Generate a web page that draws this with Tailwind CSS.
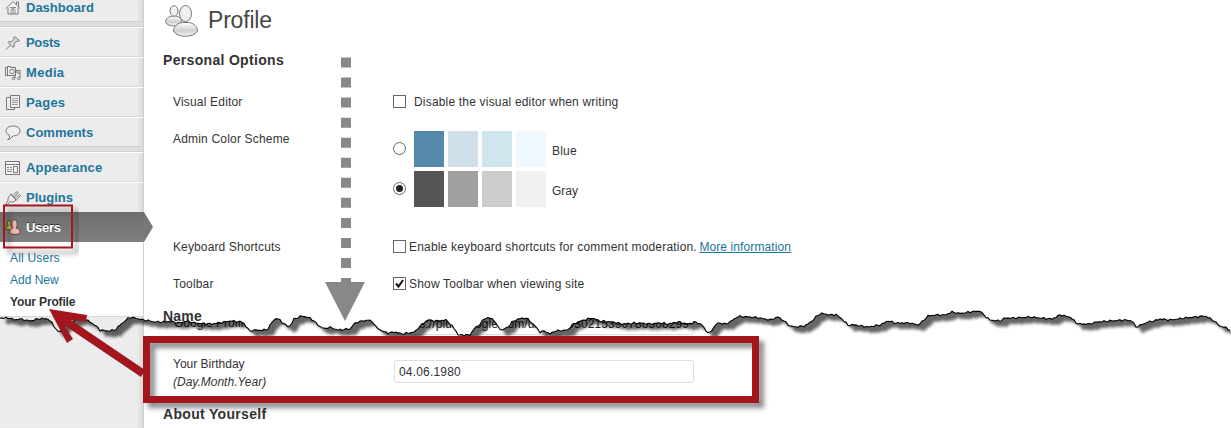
<!DOCTYPE html>
<html lang="en">
<head>
<meta charset="utf-8">
<title>Profile</title>
<script src="https://cdn.jsdelivr.net/npm/@tailwindcss/browser@4"></script>
</head>
<body class="relative w-[1231px] h-[428px] overflow-hidden bg-white font-['Liberation_Sans',Arial,sans-serif] text-[12px] leading-[16px] text-[#333]">
<div class="flex h-full">
  <aside class="w-36 shrink-0 bg-[#ececec] border-r border-[#cfcfcf] shadow-[inset_-5px_0_5px_-3px_rgba(0,0,0,0.10)] h-full">
    <nav class="text-[13px] font-bold text-[#21759b]">
      <a class="flex h-[22px] items-start gap-[5px] pl-[5px] border-b border-[#cfcfcf]"><svg class="w-4 h-4 shrink-0" viewBox="0 0 16 16" fill="none" stroke="#777"><path d="M1 8.500 8 1.500l7 7M3 7.500V14h10V7.500M11.500 4.500V2h2v4.500" fill="#f6f6f6"/><path d="M6 14V9.500q2-2 4 0V14M8 8.500V14M5 7.500h6" stroke="#888"/></svg><span>Dashboard</span></a>
      <div class="h-[5px] bg-[#dedede] border-b border-[#cfcfcf]"></div>
      <a class="flex h-[30px] items-center gap-[5px] pl-[5px] pt-px border-t border-t-white border-b border-b-[#dadada]"><svg class="w-4 h-4 shrink-0" viewBox="0 0 16 16" fill="#dcdcdc" stroke="#777"><path d="M9.500 1.500l5 4-1.500 1-1.500-.4-2.500 3 .3 2.400-1.300.8L3 7.500l1-1 2.700.2 2.600-2.700-.8-1.300z"/><path d="M5.500 10 1 14.500" /></svg><span class="tracking-[-0.3px]">Posts</span></a>
      <a class="flex h-[30px] items-center gap-[5px] pl-[5px] pt-px border-t border-t-white border-b border-b-[#dadada]"><svg class="w-4 h-4 shrink-0" viewBox="0 0 16 16" fill="#f4f4f4" stroke="#777"><path d="M.5 2.500h2v-1h3v1h5v8H.5z"/><circle cx="7" cy="6.500" r="2.300"/><path d="M2.500 2.500v8"/><path d="M11 5.500h4V13M12 5.500V8h3" fill="none"/><circle cx="13.700" cy="13.500" r="1.300"/><circle cx="8.500" cy="13.500" r="1.300"/><path d="M10 13.500v-4"/></svg><span class="tracking-[0.3px]">Media</span></a>
      <a class="flex h-[30px] items-center gap-[5px] pl-[5px] pt-px border-t border-t-white border-b border-b-[#dadada]"><svg class="w-4 h-4 shrink-0" viewBox="0 0 16 16" fill="#eee" stroke="#777"><path d="M1.500 2.500h8v12h-8z"/><path d="M5.500.5h9v12h-9z"/><path d="M7 3.500h2M10 3.500h3M7 5.500h6M7 7.500h6M7 9.500h6" stroke="#999"/></svg><span class="tracking-[0.2px]">Pages</span></a>
      <a class="flex h-[30px] items-center gap-[5px] pl-[5px] pt-px border-t border-t-white border-b border-b-[#cfcfcf]"><svg class="w-4 h-4 shrink-0" viewBox="0 0 16 16" fill="#f0f0f0" stroke="#777"><path d="M8 1c4 0 7 1.800 7 4.800s-3 5-5.500 5c-.8 0-1 0-1.500.2L4.500 14.500H2.500L4.500 13V10C2.500 9.300 1 8 1 6c0-3 3-5 7-5z"/></svg><span>Comments</span></a>
      <div class="h-[5px] bg-[#dedede] border-b border-[#cfcfcf]"></div>
      <a class="flex h-[30px] items-center gap-[5px] pl-[5px] pt-px border-t border-t-white border-b border-b-[#dadada]"><svg class="w-4 h-4 shrink-0" viewBox="0 0 16 16" fill="#f4f4f4" stroke="#777"><path d="M.5 1.500h14v13H.5z"/><path d="M.5 4.500h14"/><path d="M8.500 6.500h4v6h-4z"/><path d="M2 7.500h2M5 7.500h2M2 9.500h2M5 9.500h2M2 11.500h5" stroke="#888"/></svg><span class="tracking-[0.2px]">Appearance</span></a>
      <a class="flex h-[30px] items-center gap-[5px] pl-[5px] border-t border-t-white"><svg class="w-4 h-4 shrink-0" viewBox="0 0 16 16" fill="#eee" stroke="#777"><path d="M6 4.500 11 10c-1.500 2-4 2.500-6 1.500L2.500 14.500H.5L3 10.500C2.500 8.500 4 6 6 4.500z"/><path d="M5.500 3.500l6.500 7M8 5.500 12 1.500l1 1L9.500 7M10.500 8l4-3.500.8 1L12 9.500"/></svg><span>Plugins</span></a>
      <a class="relative flex h-[30px] w-36 items-center gap-[5px] pl-[5px] bg-linear-to-b from-[#6d6d6d] to-[#808080] text-white [text-shadow:0_-1px_0_#333]"><svg class="w-4 h-4 shrink-0" viewBox="0 0 16 16"><g fill="#b9b446" stroke="#333" stroke-width=".8"><path d="M.8 10.500C1 8 2.500 7 3.200 6.800 2 5 2.500 1.500 4.200 1.500S6.500 5 5.500 6.500L8 9v2z"/></g><g fill="#eeb4b0" stroke="#4a3030" stroke-width=".8"><path d="M4.500 14c0-3 1.500-4.500 3.500-5C6 6 6.700.8 9.500.8S13 6 11.200 9c2.300.5 4.200 2 4.200 5-2.500 2-8.400 2-10.900 0z"/></g></svg><span class="pt-px tracking-[-0.3px]">Users</span>
        <svg class="absolute left-36 top-0 w-[9px] h-[30px]" viewBox="0 0 9 30"><path d="M0 0 9 15 0 30z" fill="#777"/></svg></a>
    </nav>
    <div class="bg-white h-[75px] pt-[5px] pl-[10px] border-b border-[#d8d8d8] text-[#21759b] leading-[22px]">
      <div class="tracking-[0.2px]">All Users</div><div>Add New</div><div class="font-bold text-[#333] tracking-[-0.15px]">Your Profile</div>
    </div>
  </aside>
  <main class="grow pl-[19px] tracking-[0.185px]">
    <header class="flex items-start h-[52px] pt-[3px]">
      <svg class="w-[36px] h-[36px] shrink-0" viewBox="0 0 36 36"><defs><linearGradient id="g" x2="0" y2="1"><stop stop-color="#fff"/><stop offset=".6" stop-color="#cfcfcf"/><stop offset="1" stop-color="#fafafa"/></linearGradient></defs><g fill="url(#g)" stroke="#777"><path d="M2.500 19.500c0-3.500 3-6 7-6.500h3c4 .5 6.500 3 6.500 6.500-3 4.500-13.500 4.500-16.500 0z"/><ellipse cx="11" cy="8" rx="4" ry="5.200" fill="#f2f2f2"/><path d="M10.500 28c0-4.500 4-8 9-8.500h6c5 .5 9 4 9 8.500-3.500 7-20.500 7-24 0z"/><ellipse cx="22.500" cy="10.500" rx="6" ry="8" fill="#f0f0f0"/></g></svg>
      <h2 class="pl-[9px] pt-[4px] text-[23px] leading-[26px] tracking-[-0.2px] text-[#464646]">Profile</h2>
    </header>
    <h3 class="text-[14px] leading-[16px] font-bold tracking-[0.32px]">Personal Options</h3>
    <div class="grid grid-cols-[220px_1fr] pl-[10px] pt-[26px]">
      <div>Visual Editor</div>
      <label class="flex items-center gap-2"><i class="w-[13px] h-[13px] mb-px border border-[#666] bg-white"></i><span>Disable the visual editor when writing</span></label>
      <div class="pt-[21px]">Admin Color Scheme</div>
      <div class="pt-[21px] h-[129px]">
        <label class="flex h-9 items-center"><i class="w-[13px] h-[13px] mb-[2px] rounded-full border border-[#666]"></i>
          <span class="flex gap-1 pl-2"><i class="w-[30px] h-9 bg-[#5589aa]"></i><i class="w-[30px] h-9 bg-[#cfdfe9]"></i><i class="w-[30px] h-9 bg-[#d1e5ee]"></i><i class="w-[30px] h-9 bg-[#eff8ff]"></i></span><span class="pl-[6px] pt-[4px]">Blue</span></label>
        <label class="flex h-9 items-center mt-1"><i class="w-[13px] h-[13px] mb-[2px] rounded-full border border-[#666] flex items-center justify-center"><b class="w-[7px] h-[7px] rounded-full bg-[#222]"></b></i>
          <span class="flex gap-1 pl-2"><i class="w-[30px] h-9 bg-[#555]"></i><i class="w-[30px] h-9 bg-[#a0a0a0]"></i><i class="w-[30px] h-9 bg-[#ccc]"></i><i class="w-[30px] h-9 bg-[#f1f1f1]"></i></span><span class="pl-[6px] pt-[4px] tracking-normal">Gray</span></label>
      </div>
      <div class="tracking-[0.12px]">Keyboard Shortcuts</div>
      <label class="flex items-center gap-[3px]"><i class="w-[13px] h-[13px] mb-px border border-[#666]"></i><span>Enable keyboard shortcuts for comment moderation. <a class="underline text-[#21759b] tracking-[0.1px] -ml-px">More information</a></span></label>
      <div class="pt-[21px]">Toolbar</div>
      <label class="pt-[21px] flex items-center gap-[3px]"><i class="w-[13px] h-[13px] mb-px border border-[#666]"><svg class="w-[11px] h-[11px]" viewBox="0 0 11 11"><path d="M2 5.500 4.500 8.500 9 2" fill="none" stroke="#111" stroke-width="2"/></svg></i><span>Show Toolbar when viewing site</span></label>
    </div>
    <h3 class="relative z-20 mt-[16px] text-[14px] leading-[16px] font-bold">Name</h3>
    <div class="grid grid-cols-[221px_1fr] pl-[10px] pt-[32px] h-[82px]">
      <div class="leading-[18px] -mt-px tracking-normal">Your Birthday<br><em>(Day.Month.Year)</em></div>
      <div class="pt-[4px]"><div class="w-[300px] h-[23px] border border-[#dfdfdf] rounded-[3px] pl-[4px] leading-[22px]">04.06.1980</div></div>
    </div>
    <h3 class="text-[14px] leading-[16px] font-bold tracking-[0.32px]">About Yourself</h3>
  </main>
</div>

<svg class="absolute inset-0 z-10" width="1231" height="428" viewBox="0 0 1231 428" font-family="Liberation Sans, Arial, sans-serif" font-size="12">
  <defs>
    <clipPath id="under"><path id="underPath"/></clipPath>
    <filter id="blur" x="-5%" y="-5%" width="110%" height="110%"><feGaussianBlur stdDeviation="1.500"/></filter>
    <filter id="drop" x="-10%" y="-20%" width="120%" height="150%"><feDropShadow dx="5" dy="5" stdDeviation="2.500" flood-color="#000" flood-opacity=".45"/></filter>
  </defs>
  <g clip-path="url(#under)">
    <text x="174" y="327" fill="#222">Google Profile</text>
    <path d="M394.500 310v21.500q0 3 3 3h293q3 0 3-3V310" fill="none" stroke="#dfdfdf"/>
    <text x="399" y="328" fill="#222" textLength="290">https://plus.google.com/u/0/110930215390786308299</text>
    <path id="tearShadow" fill="#000" opacity=".6" filter="url(#blur)"/>
  </g>
  <path id="tear" fill="none" stroke="#000" stroke-width="1.100"/>
  <g fill="#888"><path d="M346 57.500V290" stroke="#888" stroke-width="10" stroke-dasharray="10 10.050" fill="none"/><path d="M325 282h40l-20 39z"/></g>
  <g fill="none" stroke="#a2171e" filter="url(#drop)">
    <rect x="4" y="205.500" width="68" height="42" stroke-width="2"/>
  </g>
  <g filter="url(#drop)"><rect x="146.500" y="339.500" width="609" height="60" fill="none" stroke="#a2171e" stroke-width="7"/></g>
  <path d="M49 309 87 315 86 322 71 320 145 370 141 377 64 325 73 339 67 343z" fill="#a2171e"/>
</svg>
<script>
  const pts = [[0,318],[10,318],[14,320],[20,319],[30,321],[40,318.5],[48,319],[52,323],[56,329],[59,333],[62,328],[66,324],[72,322],[78,319],[85,319],[90,322],[96,326],[100,330],[108,331],[115,330],[120,325],[125,321],[129,317.5],[135,318],[143,320],[150,321],[155,322],[163,322],[170,321.5],[180,323],[187,321],[195,323],[212,324],[225,322],[230,321],[243,322],[247,328],[250,331],[256,330],[262,330.5],[268,329],[272,322],[276,318.5],[280,320],[284,324],[289,327],[292,323],[294,319],[302,316],[310,318],[314,321],[319,326],[325,329],[329,327],[338,330],[350,329],[354,324],[358,322],[368,320],[373,322],[376,327],[382,331],[388,333],[395,332],[402,334],[415,332],[419,327],[425,322],[428,320],[436,321],[447,320],[450,324],[455,329],[458,335],[470,335],[474,329],[480,324],[484,319],[488,317.5],[494,320],[498,327],[502,330],[508,327],[512,322],[518,319],[526,318],[530,321],[536,327],[540,332],[545,331],[550,334],[555,331],[568,330],[572,325],[578,322],[584,320],[592,318],[600,321],[613,322],[622,324],[640,323],[650,324],[660,323],[668,324],[678,322],[688,324],[696,322],[702,325],[707,332],[710,333],[713,328],[718,323],[726,324],[733,320],[738,316.5],[750,317],[760,318],[770,320],[778,317],[784,321],[790,326],[795,327],[805,326],[812,321],[818,315],[822,313.5],[830,315],[836,314.5],[842,319],[848,325],[855,325],[868,327],[880,325],[888,321],[895,323],[910,323],[918,325],[923,321],[928,316],[935,315],[945,315],[952,312],[960,313.5],[970,312],[980,311],[985,316],[990,320],[1000,321],[1005,318],[1015,318],[1030,317],[1040,318],[1052,319],[1060,315],[1070,317],[1078,324],[1090,324],[1097,322],[1110,321],[1125,320],[1132,321],[1136,327],[1141,325],[1148,322],[1154,321],[1160,319],[1170,320],[1185,318],[1195,317],[1205,316],[1213,320],[1220,326],[1227,328],[1231,331]];
  let i = 0, line = '';
  for (let x = 0; x <= 1231; x += 2) {
    while (i < pts.length - 2 && pts[i + 1][0] < x) i++;
    const [a, b] = pts[i], [c, d] = pts[i + 1];
    const y = b + (d - b) * (x - a) / (c - a) + 0.55 * Math.sin(x * 1.9) + 0.45 * Math.sin(x * 0.83);
    line += (x ? 'L' : 'M') + x + ' ' + y.toFixed(1);
  }
  document.getElementById('tear').setAttribute('d', line);
  document.getElementById('underPath').setAttribute('d', line + 'L1231 331L1231 428L0 428z');
  const sh = document.getElementById('tearShadow');
  sh.setAttribute('d', line + 'L1240 335L1240 270L0 270z');
  sh.setAttribute('transform', 'translate(6 6)');
</script>
</body>
</html>
